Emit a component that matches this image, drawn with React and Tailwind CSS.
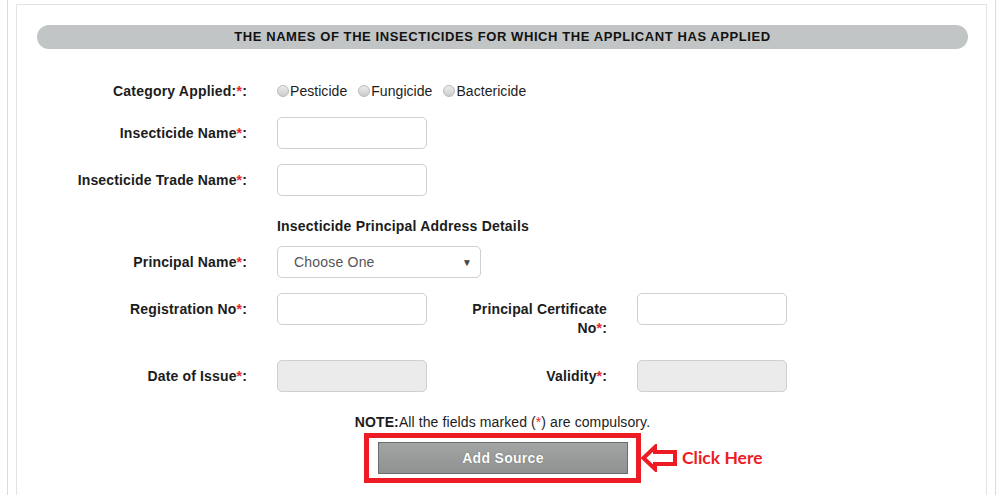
import React from 'react';

const Req = () => <span className="text-[#e8262b]">*</span>;

function Label({ children, className = '' }) {
  return (
    <div className={`text-right font-bold text-[14px] leading-[19px] tracking-[0.15px] text-[#1c1c1c] pt-[7px] ${className}`}>
      {children}
    </div>
  );
}

function TextBox({ disabled }) {
  return (
    <div
      className={`w-[150px] h-[32px] rounded-[5px] border border-[#cfcfcf] ${disabled ? 'bg-[#ebebeb]' : 'bg-white'}`}
    />
  );
}

function Radio({ label }) {
  return (
    <label className="flex items-center">
      <span className="w-[12px] h-[12px] rounded-full border border-[#b9b9b9] bg-gradient-to-b from-[#ececec] to-[#cdcdcd]" />
      <span className="ml-[1px] tracking-[0.05px]">{label}</span>
    </label>
  );
}

export default function App() {
  return (
    <div
      className="w-[989px] h-[495px] ml-[7px] border-x border-[#dcdcdc] px-[8px] bg-white overflow-hidden"
      style={{ fontFamily: '"Liberation Sans", Arial, sans-serif' }}
    >
      <div className="mt-[4px] h-[600px] border-t border-x border-[#e2e2e8] pl-[20px] pr-[18px] pt-[20px]">
        {/* section header */}
        <div className="w-[931px] h-[24px] rounded-full bg-[#c2c5c5] flex items-center justify-center">
          <span className="font-bold text-[13px] text-[#111] tracking-[0.58px]">
            THE NAMES OF THE INSECTICIDES FOR WHICH THE APPLICANT HAS APPLIED
          </span>
        </div>

        <div className="grid grid-cols-[210px_150px_150px_150px] gap-x-[30px] text-[14px] text-[#1c1c1c]">
          {/* Category */}
          <div className="mt-[32px] text-right font-bold leading-5 tracking-[0.2px]">
            Category Applied:<Req />:
          </div>
          <div className="mt-[32px] col-span-3 flex items-center gap-[11px] leading-5">
            <Radio label="Pesticide" />
            <Radio label="Fungicide" />
            <Radio label="Bactericide" />
          </div>

          {/* Insecticide name */}
          <Label className="mt-[16px]">Insecticide Name<Req />:</Label>
          <div className="mt-[16px] col-span-3"><TextBox /></div>

          {/* Trade name */}
          <Label className="mt-[15px]">Insecticide Trade Name<Req />:</Label>
          <div className="mt-[15px] col-span-3"><TextBox /></div>

          {/* principal heading */}
          <div className="col-start-2 col-span-3 mt-[20px] font-bold leading-5 tracking-[0.2px]">
            Insecticide Principal Address Details
          </div>

          {/* principal select */}
          <Label className="mt-[10px]">Principal Name<Req />:</Label>
          <div className="mt-[10px] col-span-3">
            <div className="w-[204px] h-[32px] rounded-[5px] border border-[#cfcfcf] bg-white flex items-center justify-between pl-[16px] pr-[8px] text-[#555]">
              <span className="tracking-[0.2px]">Choose One</span>
              <span className="text-[10px] text-[#444]">▼</span>
            </div>
          </div>

          {/* registration / certificate */}
          <Label className="mt-[15px]">Registration No<Req />:</Label>
          <div className="mt-[15px]"><TextBox /></div>
          <Label className="mt-[15px]">
            Principal Certificate
            <br />
            No<Req />:
          </Label>
          <div className="mt-[15px]"><TextBox /></div>

          {/* date / validity */}
          <Label className="mt-[22px]">Date of Issue<Req />:</Label>
          <div className="mt-[22px]"><TextBox disabled /></div>
          <Label className="mt-[22px]">Validity<Req />:</Label>
          <div className="mt-[22px]"><TextBox disabled /></div>
        </div>

        {/* note */}
        <div className="mt-[20px] text-center text-[14px] leading-5 text-[#1c1c1c] tracking-[0.1px]">
          <span className="font-bold">NOTE:</span>All the fields marked (<Req />) are compulsory.
        </div>

        <div className="mt-[1px] flex justify-center">
          <div className="relative border-[5px] border-[#ed1c24] pl-[9px] pr-[8px] py-[4px]">
            <button className="w-[250px] h-[32px] border border-[#6a6d6c] bg-gradient-to-b from-[#a2a5a3] to-[#8f9290] text-white font-bold text-[14px] tracking-[0.3px] [text-shadow:0_0_1px_#555]">
              Add Source
            </button>
            {/* annotation */}
            <div className="absolute left-full top-[6px] ml-[5px] flex items-center">
              <svg width="37" height="28" viewBox="0 0 37 28">
                <polygon
                  points="2.5,14 14,3 14,8 34,8 34,20 14,20 14,25"
                  fill="white"
                  stroke="#ed1c24"
                  strokeWidth="4"
                  strokeLinejoin="miter"
                />
              </svg>
              <span
                className="ml-[4px] text-[17.5px] font-bold text-[#ed1c24] whitespace-nowrap"
                style={{ fontFamily: 'Lato, "Open Sans", sans-serif' }}
              >
                Click Here
              </span>
            </div>
          </div>
        </div>
      </div>
    </div>
  );
}
